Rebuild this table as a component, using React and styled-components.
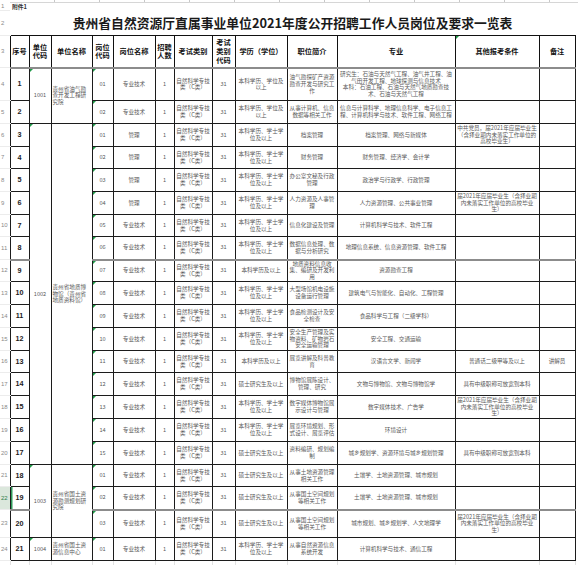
import React from 'react'
import styled, { createGlobalStyle, css } from 'styled-components'

const GlobalStyle = createGlobalStyle`
  html, body { margin: 0; padding: 0; background: #fff; overflow: hidden; }
  body { font-family: "Noto Sans CJK SC", "Noto Sans", sans-serif; }
`

const cols = [19, 22, 41, 21, 42, 19, 38, 23, 52, 50, 118, 84, 36]
const heads = ['序号', '单位\n代码', '单位名称', '岗位\n代码', '岗位名称', '招聘\n人数', '考试类别', '考试\n类别\n代码', '学历（学位）', '职位简介', '专业', '其他报考条件', '备注']

const EXAM = '自然科学专技类（C类）'
const BS = '本科学历、学士学位及以上'
const MS = '硕士研究生及以上'
const GRAD = '届2021年应届毕业生（含择业期内未落实工作单位的高校毕业生）'

const groups = [
  {
    code: '1001', name: '贵州省油气勘查开发工程研究院',
    rows: [
      { no: 1, pc: '01', pn: '专业技术', edu: '本科学历、学位及以上', intro: '油气勘探矿产资源勘查开发与研究工作', major: '研究生：石油与天然气工程、油气井工程、油气田开发工程、地球探测与信息技术\n本科：石油工程、石油与天然气地质勘查技术、石油与天然气工程', h: 33 },
      { no: 2, pc: '02', pn: '专业技术', edu: '本科学历、学位及以上', intro: '从事计算机、信息数据等相关工作', major: '信息与计算科学、地理信息科学、电子信息工程、计算机科学与技术、软件工程、网络工程', h: 23 },
    ],
  },
  {
    code: '1002', name: '贵州省地质博物馆（贵州省地质资料馆）',
    rows: [
      { no: 3, pc: '01', pn: '管理', edu: BS, intro: '档案管理', major: '档案管理、网络与新媒体', other: '中共党员，届2021年应届毕业生（含择业期内未落实工作单位的高校毕业生）', h: 23 },
      { no: 4, pc: '02', pn: '管理', edu: BS, intro: '财务管理', major: '财务管理、经济学、会计学', h: 22 },
      { no: 5, pc: '03', pn: '管理', edu: BS, intro: '办公室文秘及行政管理', major: '政治学与行政学、行政管理', h: 23 },
      { no: 6, pc: '04', pn: '管理', edu: BS, intro: '人力资源及人事管理', major: '人力资源管理、公共事业管理', other: GRAD, h: 23 },
      { no: 7, pc: '05', pn: '专业技术', edu: BS, intro: '信息化建设及管理', major: '计算机科学与技术、软件工程', h: 22 },
      { no: 8, pc: '06', pn: '专业技术', edu: BS, intro: '数据信息处理、数据与分析研究', major: '地理信息系统、信息资源管理、软件工程', h: 23, sep: true },
      { no: 9, pc: '07', pn: '专业技术', edu: '本科学历及以上', intro: '地质资料信息收集、编研及开发利用', major: '资源勘查工程', h: 22 },
      { no: 10, pc: '08', pn: '专业技术', edu: BS, intro: '大型场馆机电设施设备运行管理', major: '建筑电气与智能化、自动化、工程管理', h: 23 },
      { no: 11, pc: '09', pn: '专业技术', edu: BS, intro: '食品检测设计及安全检查', major: '食品科学与工程（二级学科）', h: 23 },
      { no: 12, pc: '10', pn: '专业技术', edu: BS, intro: '安全生产管理及实物资料、矿物岩石安全运输管理', major: '安全工程、交通运输', h: 23 },
      { no: 13, pc: '11', pn: '专业技术', edu: '本科学历及以上', intro: '展览讲解及科普教育', major: '汉语言文学、新闻学', other: '普通话二级甲等及以上', note: '讲解员', h: 22 },
      { no: 14, pc: '12', pn: '专业技术', edu: MS, intro: '博物馆展陈设计、管理、研究', major: '文物与博物馆、文物与博物馆学', other: '具有中级职称可放宽到本科', h: 23 },
      { no: 15, pc: '13', pn: '专业技术', edu: BS, intro: '数字媒体博物馆展示设计与管理', major: '数字媒体技术、广告学', other: GRAD, h: 23 },
      { no: 16, pc: '14', pn: '专业技术', edu: BS, intro: '展览环境规划、形式设计、展览评估', major: '环境设计', h: 23 },
      { no: 17, pc: '15', pn: '专业技术', edu: MS, intro: '资料编研、规划编制', major: '城乡规划学、资源环境与城乡规划管理', other: '具有中级职称可放宽到本科', h: 23 },
    ],
  },
  {
    code: '1003', name: '贵州省国土资源勘测规划研究院',
    rows: [
      { no: 18, pc: '01', pn: '专业技术', edu: MS, intro: '从事土地资源管理相关工作', major: '土壤学、土地资源管理、城市规划', h: 22 },
      { no: 19, pc: '02', pn: '专业技术', edu: MS, intro: '从事国土空间规划等相关工作', major: '土壤学、土地资源管理、城市规划', h: 23, sep: true, active: true },
      { no: 20, pc: '03', pn: '专业技术', edu: MS, intro: '从事国土空间规划等相关工作', major: '城市规划、城乡规划学、人文地理学', other: GRAD, h: 28 },
    ],
  },
  {
    code: '1004', name: '贵州省国土资源信息中心',
    rows: [
      { no: 21, pc: '01', pn: '专业技术', edu: BS, intro: '从事自然资源信息系统开发', major: '计算机科学与技术、通信工程', h: 23 },
    ],
  },
]

const Sheet = styled.div`
  width: 578px;
  height: 565px;
  overflow: hidden;
  background: #fff;
`

const Ruler = styled.div`
  height: 2px;
  margin-left: 10px;
  border-bottom: 1px solid #d6d6d6;
  background: repeating-linear-gradient(90deg, transparent 0 44px, #c8c8c8 44px 45px);
`

const Table = styled.table`
  table-layout: fixed;
  border-collapse: collapse;
  width: 575px;
`

const Col = styled.col`
  width: ${p => p.$w}px;
`

const Row = styled.tr`
  height: ${p => p.$h}px;
`

const Gutter = styled.td`
  padding: 0 0 0 1px;
  font-family: "Liberation Sans", sans-serif;
  font-size: 6px;
  line-height: 7px;
  color: #8a8a8a;
  text-align: left;
  vertical-align: middle;
  border-bottom: 1px solid #ececec;
  white-space: nowrap;
  overflow: hidden;
  ${p => p.$active && css`
    background: #dbe7dc;
    color: #2f7d4b;
  `}
`

const Note = styled.td`
  padding: 0 0 0 2px;
  font-size: 5.8px;
  line-height: 6px;
  font-weight: 700;
  color: #333;
  vertical-align: middle;
  white-space: nowrap;
`

const Title = styled.td`
  text-align: center;
  vertical-align: middle;
  font-size: 12.8px;
  line-height: 16px;
  font-weight: 700;
  color: #1a1a1a;
  white-space: nowrap;
  padding: 0;
`

const flagMark = css`
  &::before {
    content: '';
    position: absolute;
    left: 0;
    top: 0;
    border-top: 3px solid #1f9a48;
    border-right: 3px solid transparent;
  }
`

const Head = styled.th`
  position: relative;
  border: 1px solid #111;
  border-bottom: 2px solid #8c8c8c;
  padding: 0;
  font-size: 7.2px;
  line-height: 8.6px;
  font-weight: 700;
  color: #111;
  white-space: pre-line;
  text-align: center;
  vertical-align: middle;
  ${p => p.$flag && flagMark}
`

const Cell = styled.td`
  position: relative;
  border: 1px solid #1c1c1c;
  ${p => p.$sep && css`border-bottom: 2px solid #8c8c8c;`}
  padding: 0 1px;
  font-size: 5.6px;
  line-height: 6.6px;
  color: #5a5a5a;
  text-align: ${p => p.$align || 'center'};
  vertical-align: middle;
  white-space: pre-line;
  overflow: hidden;
  ${p => p.$flag && flagMark}
`

const Serial = styled(Cell)`
  font-family: "Liberation Sans", sans-serif;
  font-size: 7.2px;
  line-height: 8px;
  font-weight: 700;
  color: #1a1a1a;
  ${p => p.$active && css`box-shadow: inset 1.5px 0 0 #2e9a5a;`}
`

const Blank = styled.td`
  border: 1px solid #e2e2e2;
`

export default function App() {
  let line = 4
  return (
    <>
      <GlobalStyle />
      <Sheet>
        <Ruler />
        <Table>
          <colgroup>
            <Col $w={10} />
            {cols.map((w, i) => <Col key={i} $w={w} />)}
          </colgroup>
          <tbody>
            <Row $h={7}>
              <Gutter>1</Gutter>
              <Note colSpan={13}>附件1</Note>
            </Row>
            <Row $h={25}>
              <Gutter>2</Gutter>
              <Title colSpan={13}>贵州省自然资源厅直属事业单位2021年度公开招聘工作人员岗位及要求一览表</Title>
            </Row>
            <Row $h={32}>
              <Gutter>3</Gutter>
              {heads.map((t, i) => <Head key={i} $flag={i === 11}>{t}</Head>)}
            </Row>
            {groups.map(g => g.rows.map((r, i) => {
              const n = line++
              return (
                <Row key={r.no} $h={r.h}>
                  <Gutter $active={r.active}>{n}</Gutter>
                  <Serial $sep={r.sep} $active={r.active}>{r.no}</Serial>
                  {i === 0 && (
                    <>
                      <Cell rowSpan={g.rows.length} $flag>{g.code}</Cell>
                      <Cell rowSpan={g.rows.length} $align="left">{g.name}</Cell>
                    </>
                  )}
                  <Cell $sep={r.sep} $flag>{r.pc}</Cell>
                  <Cell $sep={r.sep}>{r.pn}</Cell>
                  <Cell $sep={r.sep}>1</Cell>
                  <Cell $sep={r.sep}>{EXAM}</Cell>
                  <Cell $sep={r.sep}>31</Cell>
                  <Cell $sep={r.sep}>{r.edu}</Cell>
                  <Cell $sep={r.sep}>{r.intro}</Cell>
                  <Cell $sep={r.sep}>{r.major}</Cell>
                  <Cell $sep={r.sep}>{r.other}</Cell>
                  <Cell $sep={r.sep}>{r.note}</Cell>
                </Row>
              )
            }))}
            <Row $h={20}>
              <Gutter>25</Gutter>
              {cols.map((w, i) => <Blank key={i} />)}
            </Row>
          </tbody>
        </Table>
      </Sheet>
    </>
  )
}
